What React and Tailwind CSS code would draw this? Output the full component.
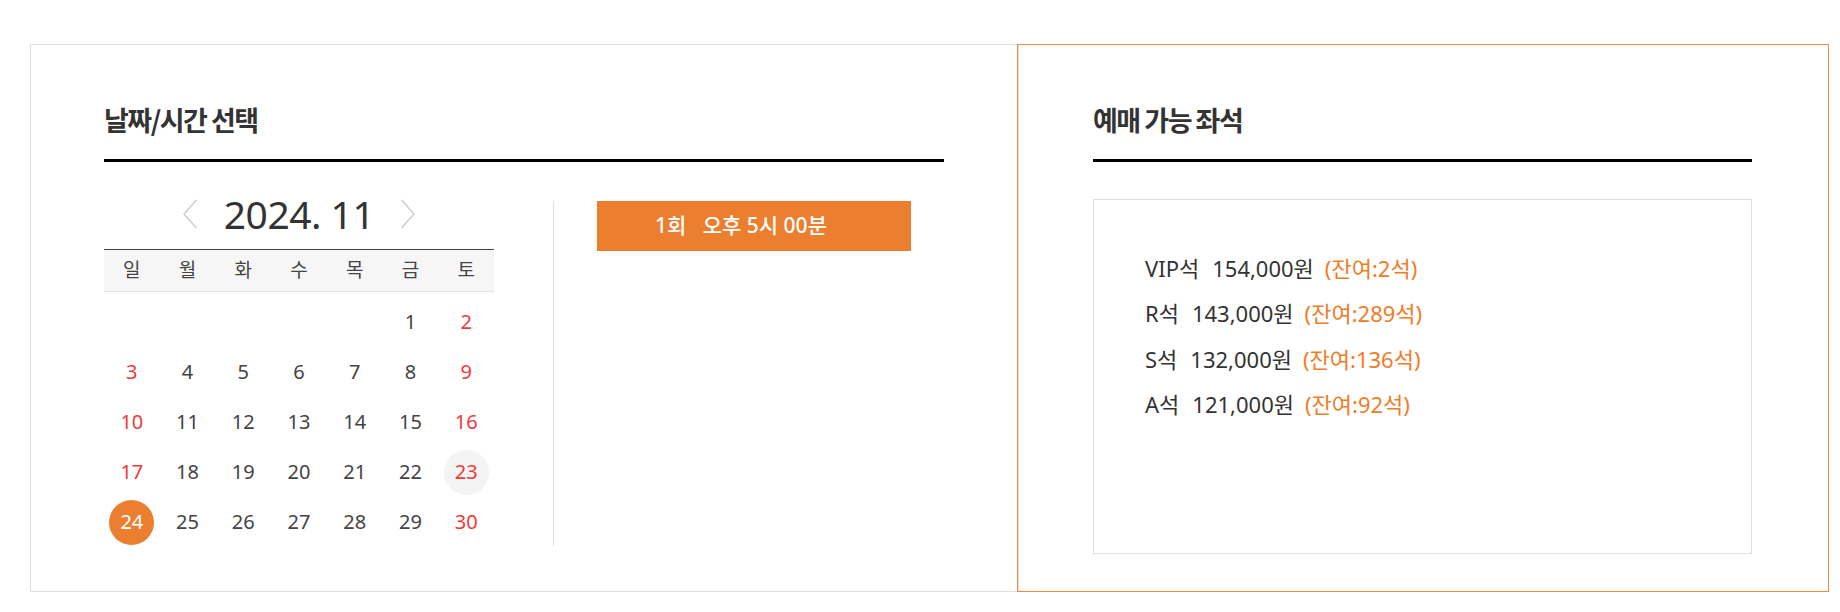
import React from "react";

const weekdays = ["일", "월", "화", "수", "목", "금", "토"];

// November 2024 — starts on a Friday
const days = [
  null, null, null, null, null, 1, 2,
  3, 4, 5, 6, 7, 8, 9,
  10, 11, 12, 13, 14, 15, 16,
  17, 18, 19, 20, 21, 22, 23,
  24, 25, 26, 27, 28, 29, 30,
];

const seats = [
  { grade: "VIP석", price: "154,000원", left: "(잔여:2석)" },
  { grade: "R석", price: "143,000원", left: "(잔여:289석)" },
  { grade: "S석", price: "132,000원", left: "(잔여:136석)" },
  { grade: "A석", price: "121,000원", left: "(잔여:92석)" },
];

function Chevron({ dir }) {
  return (
    <svg width="16" height="30" viewBox="0 0 16 30" fill="none">
      {dir === "left" ? (
        <path d="M14.5 1 L2 15 L14.5 29" stroke="#cccccc" strokeWidth="1.4" />
      ) : (
        <path d="M1.5 1 L14 15 L1.5 29" stroke="#cccccc" strokeWidth="1.4" />
      )}
    </svg>
  );
}

function Calendar() {
  return (
    <div className="w-[390px]">
      {/* month header */}
      <div className="h-[26px] mb-[22px] flex items-center justify-center gap-[26px]">
        <Chevron dir="left" />
        <span className="text-[39px] leading-[26px] text-[#333] tracking-[-0.5px]">2024. 11</span>
        <Chevron dir="right" />
      </div>

      {/* weekdays */}
      <div className="grid grid-cols-7 h-[43px] border-t border-b border-t-[#444] border-b-[#e2e2e2] bg-[#f6f6f6]">
        {weekdays.map((w) => (
          <div key={w} className="flex items-center justify-center text-[19px] text-[#444]">
            {w}
          </div>
        ))}
      </div>

      {/* days */}
      <div className="grid grid-cols-7 pt-[5px]">
        {days.map((d, i) => {
          const col = i % 7;
          const weekend = col === 0 || col === 6;
          let circle = "";
          let color = weekend ? "text-[#ec3b3b]" : "text-[#444]";
          if (d === 24) {
            circle = "bg-[#ec7f2f]";
            color = "text-white";
          } else if (d === 23) {
            circle = "bg-[#f4f4f4]";
          }
          return (
            <div key={i} className="h-[50px] flex items-center justify-center">
              {d && (
                <span
                  className={`w-[45px] h-[45px] rounded-full flex items-center justify-center text-[20px] ${circle} ${color}`}
                >
                  {d}
                </span>
              )}
            </div>
          );
        })}
      </div>
    </div>
  );
}

export default function App() {
  return (
    <div className="w-[1840px] h-[612px] bg-white font-['Noto_Sans','Noto_Sans_CJK_KR',sans-serif] pt-[44px] pl-[30px]">
      <div className="flex">
        {/* ── Date / time ─────────────────────────────────────────── */}
        <section className="w-[989px] h-[548px] border border-[#dedede] pl-[73px] pt-[56px]">
          <div className="w-[840px]">
            <h2 className="font-['Noto_Sans_CJK_KR',sans-serif] text-[27px] leading-[38px] font-bold text-[#333] tracking-[-1.5px] pb-[20px]">
              날짜/시간 선택
            </h2>
            <div className="h-[3px] bg-black" />

            <div className="flex mt-[39px]">
              <Calendar />
              <div className="w-px h-[345px] bg-[#dedede] ml-[59px]" />
              <div className="ml-[43px]">
                <button className="w-[314px] h-[50px] bg-[#ec7f2f] text-white text-[21px] font-medium flex items-center justify-start pl-[58px] whitespace-pre">
                  {"1회   오후 5시 00분"}
                </button>
              </div>
            </div>
          </div>
        </section>

        {/* ── Available seats ─────────────────────────────────────── */}
        <section className="w-[812px] h-[548px] -ml-[2px] border border-[#f08a3c] pl-[75px] pt-[56px]">
          <div className="w-[659px]">
            <h2 className="font-['Noto_Sans_CJK_KR',sans-serif] text-[27px] leading-[38px] font-bold text-[#333] tracking-[-1.5px] pb-[20px]">
              예매 가능 좌석
            </h2>
            <div className="h-[3px] bg-black" />

            <div className="mt-[37px] h-[355px] border border-[#dedede] pl-[51px] pt-[46px]">
              {seats.map((s) => (
                <div key={s.grade} className="flex text-[22px] leading-[45.3px] text-[#333]">
                  <span>{s.grade}</span>
                  <span className="ml-[13px]">{s.price}</span>
                  <span className="ml-[11px] text-[#ef7d28]">{s.left}</span>
                </div>
              ))}
            </div>
          </div>
        </section>
      </div>
    </div>
  );
}
